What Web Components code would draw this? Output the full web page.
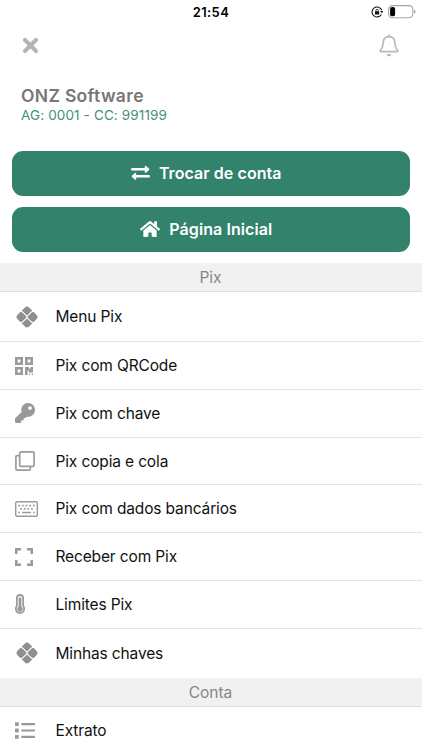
<!DOCTYPE html>
<html lang="pt-BR">
<head>
<meta charset="utf-8">
<title>ONZ Software</title>
<style>
html,body{margin:0;background:#fff}
body{width:422px;height:750px;overflow:hidden;font-family:Inter,"Liberation Sans",sans-serif;color:#111}
</style>
</head>
<body>
<bank-menu></bank-menu>
<script>
const icons = {
close:`<svg width="17" height="17" viewBox="0 0 17 17"><path d="M3 3L14 14M14 3L3 14" stroke="#b4b4b4" stroke-width="4.1" stroke-linecap="round"/></svg>`,
bell:`<svg width="20" height="23" viewBox="0 0 20 23" fill="none" stroke="#b9b9b9" stroke-width="1.7" stroke-linejoin="round" stroke-linecap="round"><path d="M10 1.1V3M10 2.7C6.4 2.7 4.3 5.3 4.2 8.8C4.1 13 3 14.5 1.5 16.2Q.7 17.5 2 17.6H18Q19.3 17.5 18.5 16.2C17 14.5 15.9 13 15.8 8.8C15.7 5.3 13.6 2.7 10 2.7Z"/><path d="M7.5 20H12.5Q11.9 22.4 10 22.4Q8.1 22.4 7.5 20Z" fill="#b9b9b9" stroke="none"/></svg>`,
lock:`<svg width="13" height="12" viewBox="0 0 13 12" fill="none" stroke="#111"><path d="M10.7 4.2A5 5 0 1 0 10.4 8.4" stroke-width="1.1"/><path d="M9.3 5H12.3L10.8 7.2Z" fill="#111" stroke="none"/><rect x="4" y="5.3" width="4.2" height="3.3" rx=".5" fill="#111" stroke="none"/><path d="M4.9 5.5V4.6a1.2 1.2 0 0 1 2.4 0V5.5" stroke-width=".8"/></svg>`,
battery:`<svg width="28" height="14" viewBox="0 0 28 14"><rect x=".6" y=".6" width="24.2" height="12.1" rx="3.6" fill="none" stroke="#a6a6a6" stroke-width="1.1"/><rect x="2.1" y="2.1" width="5" height="9.1" rx="1.9" fill="#000"/><path d="M26 4.6Q27.5 5.1 27.5 6.7Q27.5 8.3 26 8.8Z" fill="#a6a6a6"/></svg>`,
swap:`<svg width="19" height="16" viewBox="0 0 19 16" fill="#fff"><path d="M.8 3H13.8V1.3Q14 .3 14.9.9L18 3.6Q18.6 4.3 18 5L14.9 7.7Q14 8.2 13.8 7.2V5.5H.8Q.2 5.5.2 4.9V3.6Q.2 3 .8 3ZM18.2 10H5.2V8.3Q5 7.3 4.1 7.9L1 10.6Q.4 11.3 1 12L4.1 14.7Q5 15.2 5.2 14.2V12.5H18.2Q18.8 12.5 18.8 11.9V10.6Q18.8 10 18.2 10Z"/></svg>`,
home:`<svg width="20" height="18" viewBox="0 0 576 512" preserveAspectRatio="none" fill="#fff"><path d="M280.37 148.26L96 300.11V464a16 16 0 0 0 16 16l112.06-.29a16 16 0 0 0 15.92-16V368a16 16 0 0 1 16-16h64a16 16 0 0 1 16 16v95.64a16 16 0 0 0 16 16.05L464 480a16 16 0 0 0 16-16V300L295.67 148.26a12.19 12.19 0 0 0-15.3 0zM571.6 251.47L488 182.56V44.05a12 12 0 0 0-12-12h-56a12 12 0 0 0-12 12v72.61L318.47 43a48 48 0 0 0-61 0L4.34 251.47a12 12 0 0 0-1.6 16.9l25.5 31A12 12 0 0 0 45.15 301l235.22-193.74a12.19 12.19 0 0 1 15.3 0L530.9 301a12 12 0 0 0 16.9-1.6l25.5-31a12 12 0 0 0-1.7-16.93z"/></svg>`,
pix:`<svg width="22" height="22" viewBox="0 0 22 22" fill="#8f8f8f" style="margin-left:1px"><path d="M5.4 5L8.9 1.5Q11 -.4 13.1 1.5L16.6 5Q15.4 5.2 14.5 6.1L11.6 9Q11 9.5 10.4 9L7.5 6.1Q6.6 5.2 5.4 5Z"/><path d="M5.4 5L8.9 1.5Q11 -.4 13.1 1.5L16.6 5Q15.4 5.2 14.5 6.1L11.6 9Q11 9.5 10.4 9L7.5 6.1Q6.6 5.2 5.4 5Z" transform="rotate(180 11 11)"/><path d="M4.2 6H5Q6 6.1 6.8 6.9L10 10.1Q10.7 11 10 11.9L6.8 15.1Q6 15.9 5 16H4.2L1.4 13.1Q-.5 11 1.4 8.9Z"/><path d="M4.2 6H5Q6 6.1 6.8 6.9L10 10.1Q10.7 11 10 11.9L6.8 15.1Q6 15.9 5 16H4.2L1.4 13.1Q-.5 11 1.4 8.9Z" transform="rotate(180 11 11)"/></svg>`,
qr:`<svg width="18" height="18" viewBox="0 0 18 18" fill="#9a9a9a"><path fill-rule="evenodd" d="M0 0H8V8H0ZM2.6 2.6V5.4H5.4V2.6ZM10 0H18V8H10ZM12.6 2.6V5.4H15.4V2.6ZM0 10H8V18H0ZM2.6 12.6V15.4H5.4V12.6Z"/><path d="M10 10H14V11.6H15.6V10H18V15.4H13.8V13.6H12.6V18H10ZM14 16.7H15.3V18H14ZM16.7 16.7H18V18H16.7Z"/></svg>`,
key:`<svg width="20" height="20" viewBox="0 0 512 512" fill="#999"><path d="M512 176.001C512 273.203 433.202 352 336 352c-11.22 0-22.19-1.062-32.827-3.069l-24.012 27.014A23.999 23.999 0 0 1 261.223 384H224v40c0 13.255-10.745 24-24 24h-40v40c0 13.255-10.745 24-24 24H24c-13.255 0-24-10.745-24-24v-78.059c0-6.365 2.529-12.47 7.029-16.971l161.802-161.802C163.108 213.814 160 195.271 160 176 160 78.798 238.797.001 335.999 0 433.488-.001 512 78.511 512 176.001zM336 128c0 26.51 21.49 48 48 48s48-21.49 48-48-21.49-48-48-48-48 21.49-48 48z"/></svg>`,
copy:`<svg width="20" height="20" viewBox="0 0 20 20" fill="none" stroke="#9b9b9b" stroke-width="1.7"><rect x="4.7" y=".9" width="14.4" height="14.4" rx="1.4"/><path d="M4.4 4.6H2.3Q.9 4.6.9 6V17.7Q.9 19.1 2.3 19.1H14Q15.4 19.1 15.4 17.7V15.5"/></svg>`,
keyboard:`<svg width="23" height="16" viewBox="0 0 23 16" fill="none" stroke="#9b9b9b"><rect x=".7" y=".7" width="21.6" height="14.6" rx="1.3" stroke-width="1.4"/><path d="M3.3 4.6H20M5.1 7.9H18.5" stroke-width="1.7" stroke-dasharray="1.7 1.97"/><path d="M3.2 11.5H4.9M6.9 11.5H16M18 11.5H19.7" stroke-width="1.5"/></svg>`,
scan:`<svg width="18" height="18" viewBox="0 0 18 18" fill="none" stroke="#999" stroke-width="2.5"><path d="M1.25 6V1.25H6M12 1.25H16.75V6M16.75 12V16.75H12M6 16.75H1.25V12"/></svg>`,
temp:`<svg width="10" height="20" viewBox="0 0 10 20" fill="none" stroke="#999"><path d="M1.8 4.1a3.2 3.2 0 0 1 6.4 0V11.5Q9.2 12.8 9.2 14.9A4.2 4.2 0 0 1 .8 14.9Q.8 12.8 1.8 11.5Z" fill="#e2e2e2" stroke-width="1.6"/><path d="M5 5V14" stroke-width="2.3" stroke-linecap="round"/><circle cx="5" cy="15" r="2.6" fill="#999" stroke="none"/></svg>`,
list:`<svg width="20" height="17" viewBox="0 0 20 17" fill="#999"><rect width="3.8" height="3.8" y=".2" rx=".6"/><rect width="3.8" height="3.8" y="6.6" rx=".6"/><rect width="3.8" height="3.8" y="13" rx=".6"/><rect x="6.3" y="1" width="13.7" height="2.2" rx=".6"/><rect x="6.3" y="7.4" width="13.7" height="2.2" rx=".6"/><rect x="6.3" y="13.8" width="13.7" height="2.2" rx=".6"/></svg>`
};
function define(name, css, html){
  customElements.define(name, class extends HTMLElement{
    connectedCallback(){
      if(this.shadowRoot) return;
      this.attachShadow({mode:'open'}).innerHTML = `<style>svg{display:block}${css}</style>${html(this)}`;
    }
  });
}
define('ui-icon', ':host{display:block;flex:none}', e => icons[e.getAttribute('name')]);
define('status-bar', ':host{display:grid;grid-template-columns:1fr auto 1fr;align-items:center;height:24px;padding:0 6px 0 6px;box-sizing:border-box}time{font-size:13px;font-weight:600;letter-spacing:.35px;color:#000}div{display:flex;justify-content:flex-end;align-items:center;gap:4px}',
  () => '<span></span><time>21:54</time><div><ui-icon name="lock"></ui-icon><ui-icon name="battery"></ui-icon></div>');
define('top-bar', ':host{display:flex;justify-content:space-between;align-items:center;height:42px;padding:0 23px 0 22px}',
  () => '<ui-icon name="close"></ui-icon><ui-icon name="bell"></ui-icon>');
define('account-info', ':host{display:block;height:65px;padding:20px 21px 0}h1{margin:0;font-size:17.5px;line-height:20px;font-weight:600;color:#777;letter-spacing:.33px}p{margin:0;font-size:13.5px;line-height:18px;color:#43907a;letter-spacing:.13px}',
  () => '<h1>ONZ Software</h1><p>AG: 0001 - CC: 991199</p>');
define('action-button', ':host{display:block;height:45px}button{box-sizing:border-box;display:flex;align-items:center;justify-content:center;gap:9px;width:100%;height:100%;border:0;border-radius:11px;background:#32826c;color:#fff;font:600 16px Inter,"Liberation Sans",sans-serif;letter-spacing:.07px;padding:0 9px 1px 0}',
  e => `<button><ui-icon name="${e.getAttribute('icon')}"></ui-icon><span><slot></slot></span></button>`);
define('section-title', ':host{display:flex;box-sizing:border-box;height:29px;align-items:center;justify-content:center;background:#f1f1f1;border-bottom:1px solid #dedede;padding-right:1px;font-size:15.5px;color:#868686}', () => '<slot></slot>');
define('menu-row', ':host{display:flex;box-sizing:border-box;align-items:center;height:48px;padding:0 0 1px 15px;border-bottom:1px solid #e4e4e4;font-size:15.5px;letter-spacing:-.14px}:host([size="tall"]){height:50px}:host([size="short"]){height:47px;padding-bottom:0}:host([size="last"]){height:49px;border:0}:host([low]){padding-bottom:0}div{width:40.5px;flex:none}',
  e => `<div><ui-icon name="${e.getAttribute('icon')}"></ui-icon></div><span><slot></slot></span>`);
define('bank-menu', ':host{display:block;height:750px;overflow:hidden;background:#fff}nav{display:flex;flex-direction:column;gap:11px;padding:0 12px 11px 11.5px}',
  () => `<status-bar></status-bar><top-bar></top-bar><account-info></account-info>
<nav><action-button icon="swap">Trocar de conta</action-button><action-button icon="home">Página Inicial</action-button></nav>
<section-title>Pix</section-title>
<menu-row icon="pix" size="tall" low>Menu Pix</menu-row>
<menu-row icon="qr" low>Pix com QRCode</menu-row>
<menu-row icon="key">Pix com chave</menu-row>
<menu-row icon="copy" size="short">Pix copia e cola</menu-row>
<menu-row icon="keyboard" low>Pix com dados bancários</menu-row>
<menu-row icon="scan" low>Receber com Pix</menu-row>
<menu-row icon="temp">Limites Pix</menu-row>
<menu-row icon="pix" size="last">Minhas chaves</menu-row>
<section-title>Conta</section-title>
<menu-row icon="list">Extrato</menu-row>`);
</script>
</body>
</html>
